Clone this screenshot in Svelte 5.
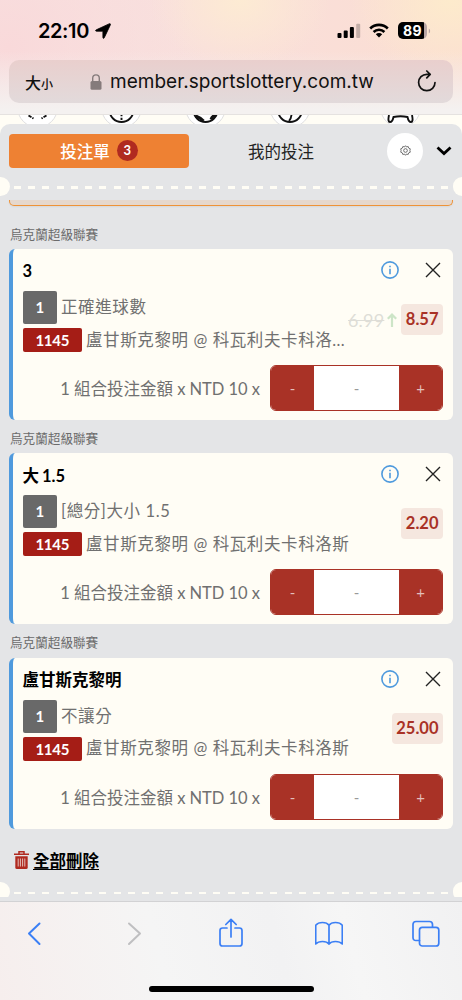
<script>
  const bets = $state([
    {
      league: '烏克蘭超級聯賽',
      pick: '3',
      market: '正確進球數',
      match: '盧甘斯克黎明 @ 科瓦利夫卡科洛…',
      oldOdds: '6.99',
      odds: '8.57',
    },
    {
      league: '烏克蘭超級聯賽',
      pick: '大 1.5',
      market: '[總分]大小 1.5',
      match: '盧甘斯克黎明 @ 科瓦利夫卡科洛斯',
      odds: '2.20',
    },
    {
      league: '烏克蘭超級聯賽',
      pick: '盧甘斯克黎明',
      market: '不讓分',
      match: '盧甘斯克黎明 @ 科瓦利夫卡科洛斯',
      odds: '25.00',
    },
  ]);

  const sports = [37.5, 121.5, 205.5, 290, 400.5];
</script>

<div class="phone">
  <header>
    <div class="status">
      <span class="time">22:10</span>
      <svg class="loc" viewBox="0 0 16 16" width="16" height="16"><path d="M15.200.8c.5.3.3.8.1 1.200L9.300 14.700c-.5 1-1.400.8-1.400-.2V8.200H1.500c-1.100 0-1.300-.9-.2-1.400L14 .9c.5-.2.9-.3 1.200-.1z" stroke="#000" stroke-width="0.800" /></svg>
      <svg class="signal" viewBox="0 0 24 16" width="24" height="16">
        <rect x="0.500" y="10" width="4" height="5" rx="1" />
        <rect x="6.700" y="7.500" width="4" height="7.500" rx="1" />
        <rect x="12.900" y="4" width="4" height="11" rx="1" />
        <rect x="19.200" y="0.700" width="4" height="14.300" rx="1" opacity="0.220" />
      </svg>
      <svg class="wifi" viewBox="0 0 20 15" width="20" height="15">
        <g fill="none" stroke="#000" stroke-width="2.600">
          <path d="M1.200 5.500a12.500 12.500 0 0 1 17.600 0" />
          <path d="M4.600 9a7.700 7.700 0 0 1 10.800 0" />
        </g>
        <path d="M6.800 11.200a4.600 4.600 0 0 1 6.400 0L10 14.500z" />
      </svg>
      <span class="battery">89</span>
      <svg class="cap" viewBox="0 0 3 6" width="3" height="6"><path d="M.8.500a3 3 0 0 1 0 5z" /></svg>
    </div>
    <div class="url">
      <span class="aa">大<small>小</small></span>
      <svg class="lock" viewBox="0 0 12 16" width="12" height="16">
        <path d="M2.700 8V4.200a3.300 3.300 0 0 1 6.600 0V8" fill="none" stroke="#857b7b" stroke-width="1.400" />
        <rect x="0.500" y="7" width="11" height="8.800" rx="1.500" fill="#857b7b" />
      </svg>
      <span class="host">member.sportslottery.com.tw</span>
      <svg class="reload" viewBox="0 0 20 24" width="20" height="24" fill="none" stroke="#111" stroke-width="1.700" stroke-linecap="round" stroke-linejoin="round">
        <path d="M18 12.500a8.200 8.200 0 1 1-8.200-8.200h3.200M9.800 1l3.400 3.300-3.400 3.600" />
      </svg>
    </div>
  </header>

  <svg class="sports" viewBox="0 115 462 20" width="462" height="20">
    {#each sports as x}
      <circle cx={x} cy="107.300" r="20" fill="#fff" stroke="#dfdfe0" />
    {/each}
    <g fill="none" stroke="#111" stroke-width="1.900">
      <path d="M28.500 115.500l5 3M46.500 115.500l-5 3" stroke-dasharray="3.500 1" />
      <circle cx="121.500" cy="110" r="12" />
      <path d="M121.500 114v6" stroke-dasharray="2.300 1.500" />
      <circle cx="205.500" cy="110" r="12" />
      <path d="M195.500 116q5 1.500 8 5M216 115q-4 1-5 4.500" stroke-width="3" />
      <circle cx="290" cy="110" r="12" />
      <path d="M291.500 115q-.5 4-2.500 6" />
      <path d="M389 115q-1.500 7 1 7 2.500 0 3.500-5 7-1.500 14 0 1 5 3.500 5 2.500 0 1-7" />
    </g>
  </svg>

  <main>
    <div class="tabs">
      <button class="tab active">投注單<b>3</b></button>
      <button class="tab">我的投注</button>
      <button class="gear" aria-label="設定">
        <svg viewBox="0 0 24 24" width="11" height="11" fill="none" stroke="#555" stroke-width="1.800">
          <path d="M12 1.500l2.300 2.800 3.500-1 1.200 3.500 3.400 1.500-.8 3.700.8 3.700-3.400 1.500-1.200 3.500-3.500-1-2.300 2.800-2.300-2.800-3.500 1L5 17.200l-3.400-1.500.8-3.700-.8-3.700L5 6.800l1.200-3.500 3.500 1z" />
          <circle cx="12" cy="12" r="4" />
        </svg>
      </button>
      <svg class="down" viewBox="0 0 16 10" width="16" height="10" fill="none" stroke="#000" stroke-width="2.800"><path d="M1.500 1.500L8 7.500l6.500-6" /></svg>
    </div>

    <div class="perforation"><i></i><span></span><i></i></div>

    <div class="prev"></div>

    {#each bets as bet}
      <div class="league">{bet.league}</div>
      <article>
        <div class="head">
          <strong>{bet.pick}</strong>
          <svg viewBox="0 0 18 18" width="18" height="18" fill="none" stroke="#4f9add" stroke-width="1.600">
            <circle cx="9" cy="9" r="8.100" />
            <path d="M9 7.800v5.400M9 4.800v1.500" />
          </svg>
          <svg viewBox="0 0 16 16" width="16" height="16" fill="none" stroke="#222" stroke-width="1.400"><path d="M1 1l14 14M15 1L1 15" /></svg>
        </div>
        <div class="info">
          <div class="lines">
            <div class="line"><span class="num">1</span>{bet.market}</div>
            <div class="line"><span class="code">1145</span>{bet.match}</div>
          </div>
          <div class="price">
            {#if bet.oldOdds}
              <s>{bet.oldOdds}</s>
              <svg viewBox="0 0 10 14" width="10" height="14" fill="none" stroke="#cde5c7" stroke-width="2.200"><path d="M5 14V1.500M.8 5.800L5 1.600l4.200 4.200" /></svg>
            {/if}
            <span class="odds">{bet.odds}</span>
          </div>
        </div>
        <div class="stake">
          <span class="label">1 組合投注金額 x NTD 10 x</span>
          <div class="stepper">
            <button>-</button>
            <span>-</span>
            <button>+</button>
          </div>
        </div>
      </article>
    {/each}

    <div class="clear">
      <svg viewBox="0 0 15 18" width="15" height="18">
        <path d="M5 2.500V.8h5v1.700M0 3.300h15" fill="none" stroke="#b02a20" stroke-width="1.500" />
        <path d="M1.300 5.200h12.400V16.500q0 1.500-1.500 1.500H2.800q-1.500 0-1.500-1.500z" fill="#b02a20" />
        <path d="M4.200 7.500v8M6.400 7.500v8M8.600 7.500v8M10.800 7.500v8" stroke="#e9cfcc" stroke-width="0.900" />
      </svg>
      <a href="#clear">全部刪除</a>
    </div>

    <div class="perforation end"><i></i><span></span><i></i></div>
  </main>

  <footer>
    <nav>
      <svg viewBox="0 0 28 30" width="28" height="30"><path d="M17.500 5.500L7 15.500l10.500 10.500" stroke-width="2" /></svg>
      <svg viewBox="0 0 28 30" width="28" height="30"><path d="M9 5.500L20 15.500 9 26" stroke="#bfbfc1" stroke-width="2" /></svg>
      <svg viewBox="0 0 28 30" width="28" height="30"><path d="M10 10H5.500Q3 10 3 12.500v13Q3 28 5.500 28h17q2.500 0 2.500-2.500v-13Q25 10 22.500 10H18M14 19V1.500M8.800 6.500L14 1.300l5.200 5.200" /></svg>
      <svg viewBox="0 0 28 30" width="28" height="30"><path d="M14 7.200Q12 4.500 7.500 4.500T.7 7.200V26Q3 23.500 7.500 23.500T14 26M14 7.200Q16 4.500 20.500 4.500T27.300 7.200V26Q25 23.500 20.500 23.500T14 26M14 7.200V26" /></svg>
      <svg viewBox="0 0 28 30" width="28" height="30"><path d="M7.500 22.500H4Q1 22.500 1 19.500V6.500Q1 3.500 4 3.500H17.500q3 0 3 3v2.700" /><rect x="7.500" y="9.300" width="19.300" height="18.700" rx="2.800" /></svg>
    </nav>
    <div class="home"></div>
  </footer>
</div>

<style>
  :global(body) {
    background: #fffdf5;
  }

  .phone {
    width: 462px;
    height: 1000px;
    overflow: hidden;
    display: flex;
    flex-direction: column;
    font-family: Lato, "Noto Sans CJK TC", sans-serif;
    background: #fffdf5;
  }
  button {
    border: 0;
    padding: 0;
    font: inherit;
    color: inherit;
    background: none;
  }
  svg {
    flex: none;
    display: block;
  }

  header {
    flex: none;
    height: 115px;
    box-sizing: border-box;
    border-bottom: 1px solid #e5e2e0;
    background:
      linear-gradient(180deg, rgba(244, 241, 241, 0) 45%, #f4f1f0 96%),
      radial-gradient(circle at 2% 42%, #f9d9da, transparent 40%),
      radial-gradient(ellipse 90px 70px at 240px 0, #fdebd3, transparent),
      radial-gradient(ellipse 100px 80px at 450px 0, #fdebcc, transparent),
      linear-gradient(90deg, #f7e4e3, #f9dfdc 45%, #fbded2);
    font-family: Inter, "Noto Sans CJK TC", sans-serif;
  }
  .status {
    height: 60px;
    display: flex;
    align-items: center;
    padding: 1px 31px 0 38px;
    box-sizing: border-box;
  }
  .time {
    width: 57px;
    font-size: 20px;
    font-weight: 600;
    letter-spacing: -0.400px;
  }
  .signal { margin-left: auto; }
  .wifi { margin-left: 8px; }
  .battery {
    width: 29px;
    height: 17px;
    margin-left: 9px;
    border-radius: 5px;
    background: linear-gradient(90deg, #000 26px, #b8a5a3 26px);
    color: #fff;
    font-size: 14px;
    font-weight: 700;
    line-height: 17px;
    text-align: center;
    letter-spacing: 0.300px;
  }
  .cap { margin-left: 1px; fill: #b8a5a3; }
  .url {
    height: 43px;
    margin: 0 9px 0 9px;
    padding: 0 16px;
    display: flex;
    align-items: center;
    border-radius: 10px;
    background: linear-gradient(180deg, #e9cfcd, #e2dadb);
    color: #111;
  }
  .aa {
    width: 65px;
    font-size: 16px;
    font-weight: 500;
    white-space: nowrap;
  }
  .aa small { font-size: 12px; }
  .host {
    margin-left: 8px;
    font-size: 19px;
    letter-spacing: 0.030px;
    white-space: nowrap;
  }
  .reload { margin-left: auto; }

  .sports {
    margin-bottom: -11px;
  }

  main {
    flex: none;
    position: relative;
    height: 777px;
    overflow: hidden;
    box-sizing: border-box;
    border-radius: 10px 10px 0 0;
    background: #e4e5e7;
  }
  .tabs {
    height: 53px;
    padding: 0 10px 0 9px;
    display: flex;
    align-items: center;
    box-sizing: border-box;
  }
  .tab {
    width: 180px;
    height: 34px;
    margin-right: 2px;
    display: flex;
    align-items: center;
    justify-content: center;
    border-radius: 4px;
    font-size: 16.500px;
    color: #222;
  }
  .tab.active {
    background: #ee8133;
    color: #fff;
    font-weight: 500;
    margin-right: 2px;
  }
  .tab b {
    width: 21px;
    height: 21px;
    margin-left: 7px;
    border-radius: 50%;
    background: #b02a20;
    font-size: 13px;
    line-height: 21px;
  }
  .gear {
    width: 36px;
    height: 36px;
    margin-left: 14px;
    display: grid;
    place-items: center;
    border-radius: 50%;
    background: #fff;
  }
  .down { margin-left: auto; }

  .perforation {
    height: 19px;
    display: flex;
    align-items: center;
    justify-content: space-between;
  }
  .perforation i {
    width: 9.500px;
    height: 19px;
    border-radius: 0 10px 10px 0;
    background: #fffdf5;
  }
  .perforation i:last-child {
    border-radius: 10px 0 0 10px;
  }
  .perforation span {
    width: 434px;
    height: 2.500px;
    margin-top: 2px;
    background: repeating-linear-gradient(90deg, #fffdf5 0 7px, transparent 7px 14.240px);
  }
  .prev {
    height: 6px;
    margin: 4px 9px 0;
    box-sizing: border-box;
    border: 1px solid #ee9338;
    border-top: 0;
    border-radius: 0 0 5px 5px;
    background: #e6d8cd;
    box-shadow: 0 1px 2px rgba(0, 0, 0, 0.060);
  }

  .league {
    height: 33.200px;
    padding: 0 10px;
    font-size: 12.600px;
    line-height: 38px;
    color: #6b6b6b;
  }
  .prev + .league {
    height: 43px;
    line-height: 58px;
  }
  article {
    height: 171.100px;
    margin: 0 9px;
    padding: 0 10px 0 9.500px;
    box-sizing: border-box;
    border-left: 4px solid #4f9add;
    border-radius: 6px;
    background: #fffdf5;
    color: #707070;
  }
  .head {
    height: 42px;
    display: flex;
    align-items: center;
    padding-right: 2px;
  }
  .head strong {
    flex: 1;
    padding-top: 1px;
    font-size: 16.500px;
    word-spacing: -1px;
    color: #000;
  }
  .head svg + svg { margin-left: 26px; }
  .info {
    height: 61px;
    display: flex;
    justify-content: space-between;
  }
  .lines {
    width: 325px;
    display: flex;
    flex-direction: column;
    gap: 4px;
    margin-right: -20px;
  }
  .line {
    display: flex;
    align-items: center;
    font-size: 16.500px;
    letter-spacing: 0.600px;
    line-height: 23px;
    white-space: nowrap;
  }
  .num, .code {
    flex: none;
    margin-right: 4px;
    border-radius: 2px;
    background: #696969;
    color: #fff;
    font-size: 15px;
    font-weight: 700;
    letter-spacing: -0.300px;
    text-align: center;
  }
  .num {
    width: 34.500px;
    height: 33px;
    line-height: 33px;
  }
  .code {
    width: 59.500px;
    height: 24px;
    line-height: 24px;
    background: #a51d16;
  }
  .price {
    height: 31px;
    margin-top: 13px;
    display: flex;
    align-items: center;
  }
  .price s {
    margin-right: 3px;
    font-size: 18px;
    letter-spacing: 0.200px;
    color: #deddd7;
  }
  .odds {
    height: 31px;
    margin-left: 4px;
    padding: 0 4.500px;
    border-radius: 4px;
    background: #f5e7df;
    color: #a93226;
    font-size: 16.500px;
    font-weight: 700;
    line-height: 31px;
  }
  .stake {
    height: 46px;
    margin-top: 13px;
    display: flex;
    align-items: center;
    justify-content: flex-end;
  }
  .label {
    margin-right: 10px;
    font-size: 16.500px;
    word-spacing: -0.100px;
    white-space: nowrap;
  }
  .stepper {
    width: 173px;
    height: 46px;
    box-sizing: border-box;
    display: grid;
    grid-template-columns: 43px 1fr 43px;
    border: 1px solid #a93226;
    border-radius: 6px;
    overflow: hidden;
    background: #fff;
    text-align: center;
    line-height: 44px;
    font-size: 15px;
    color: #999;
  }
  .stepper button {
    background: #a93226;
    color: #e3bfba;
  }

  .clear {
    height: 62px;
    padding-left: 14px;
    display: flex;
    align-items: center;
    gap: 4px;
  }
  .clear a {
    font-size: 16.500px;
    font-weight: 700;
    color: #000;
    text-underline-offset: 2px;
    text-decoration-thickness: 1px;
  }
  .end {
    height: 15px;
    margin-top: -9px;
    overflow: hidden;
    align-items: flex-start;
  }
  .end i { flex: none; }
  .end span { margin-top: 10px; }

  footer {
    flex: none;
    height: 99px;
    box-sizing: border-box;
    border-top: 1px solid #d2d2d4;
    background: linear-gradient(75deg, #f6eeed, #f5f5f5 35%, #f2f2f3 60%, #f6f6f6 75%, #f1f1f2);
    display: flex;
    flex-direction: column;
    align-items: center;
  }
  nav {
    width: 100%;
    height: 62px;
    padding: 0 22px;
    box-sizing: border-box;
    display: flex;
    align-items: center;
    justify-content: space-between;
  }
  nav svg {
    fill: none;
    stroke: #3b7ff5;
    stroke-width: 1.700;
    stroke-linecap: round;
    stroke-linejoin: round;
  }
  .home {
    width: 165px;
    height: 6px;
    margin-top: 22px;
    border-radius: 3px;
    background: #000;
  }
</style>
